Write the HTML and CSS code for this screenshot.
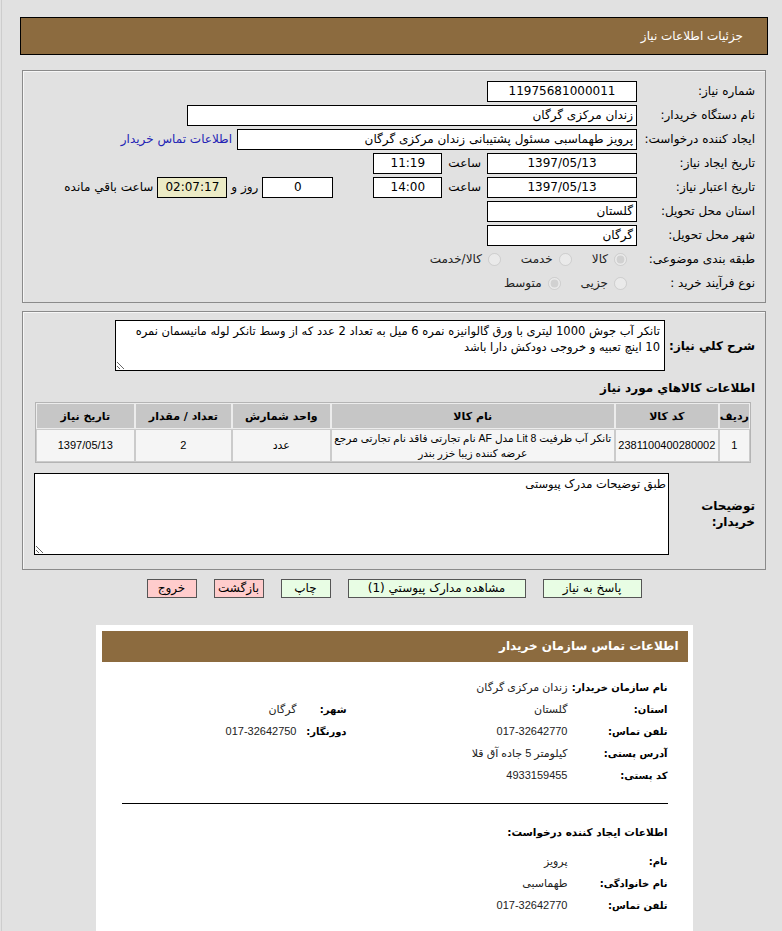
FILE: index.html
```html
<!DOCTYPE html>
<html lang="fa" dir="rtl">
<head>
    <meta charset="UTF-8"/>
    <title>جزئیات اطلاعات نیاز</title>
    <link rel="stylesheet" href="styles.css">
</head>
<body>
<div class="page">
    <div class="title-bar">جزئیات اطلاعات نیاز</div>

    <!-- main info -->
    <div class="panel info-panel">
        <div class="row">
            <span class="lbl">شماره نیاز:</span>
            <span class="field center w150">11975681000011</span>
        </div>
        <div class="row">
            <span class="lbl">نام دستگاه خریدار:</span>
            <span class="field w450">زندان مرکزی گرگان</span>
        </div>
        <div class="row">
            <span class="lbl">ایجاد کننده درخواست:</span>
            <span class="field w400">پرویز طهماسبی مسئول پشتیبانی زندان مرکزی گرگان</span>
            <a class="contact-link" href="#">اطلاعات تماس خریدار</a>
        </div>
        <div class="row">
            <span class="lbl">تاریخ ایجاد نیاز:</span>
            <span class="field center w150">1397/05/13</span>
            <span class="inline-lbl">ساعت</span>
            <span class="field center w69">11:19</span>
        </div>
        <div class="row">
            <span class="lbl">تاریخ اعتبار نیاز:</span>
            <span class="field center w150">1397/05/13</span>
            <span class="inline-lbl">ساعت</span>
            <span class="field center w69">14:00</span>
            <span class="field center w71 days">0</span>
            <span class="small-lbl">روز و</span>
            <span class="field center w70 remain">02:07:17</span>
            <span class="small-lbl">ساعت باقي مانده</span>
        </div>
        <div class="row">
            <span class="lbl">استان محل تحویل:</span>
            <span class="field w150">گلستان</span>
        </div>
        <div class="row">
            <span class="lbl">شهر محل تحویل:</span>
            <span class="field w150">گرگان</span>
        </div>
        <div class="row">
            <span class="lbl">طبقه بندی موضوعی:</span>
            <label class="opt"><input type="radio" disabled checked> کالا</label>
            <label class="opt"><input type="radio" disabled> خدمت</label>
            <label class="opt"><input type="radio" disabled> کالا/خدمت</label>
        </div>
        <div class="row">
            <span class="lbl">نوع فرآیند خرید :</span>
            <label class="opt"><input type="radio" disabled> جزیی</label>
            <label class="opt"><input type="radio" disabled checked> متوسط</label>
        </div>
    </div>

    <!-- goods -->
    <div class="panel goods-panel">
        <div class="desc-row">
            <span class="desc-lbl">شرح کلي نياز:</span>
            <textarea class="desc-box" readonly>تانکر آب جوش 1000 لیتری با ورق گالوانیزه نمره 6 میل به تعداد 2 عدد که از وسط تانکر لوله مانیسمان نمره 10 اینچ تعبیه و خروجی دودکش دارا باشد</textarea>
        </div>

        <div class="section-title">اطلاعات کالاهاي مورد نياز</div>

        <table class="goods-table">
            <tr>
                <th class="c-idx">ردیف</th>
                <th class="c-code">کد کالا</th>
                <th class="c-name">نام کالا</th>
                <th class="c-unit">واحد شمارش</th>
                <th class="c-qty">تعداد / مقدار</th>
                <th class="c-date">تاریخ نیاز</th>
            </tr>
            <tr>
                <td>1</td>
                <td>2381100400280002</td>
                <td class="name-cell">تانکر آب ظرفیت 8 Lit مدل AF نام تجارتی فاقد نام تجارتی مرجع عرضه کننده زیبا خزر بندر</td>
                <td>عدد</td>
                <td>2</td>
                <td>1397/05/13</td>
            </tr>
        </table>

        <div class="notes-row">
            <span class="notes-lbl">توضیحات خریدار:</span>
            <textarea class="notes-box" readonly>طبق توضیحات مدرک پیوستی</textarea>
        </div>
    </div>

    <div class="buttons">
        <button class="btn green w99">پاسخ به نیاز</button>
        <button class="btn green w178">مشاهده مدارک پیوستي (1)</button>
        <button class="btn green w50">چاپ</button>
        <button class="btn pink w50">بازگشت</button>
        <button class="btn pink w50">خروج</button>
    </div>

    <!-- buyer contact card -->
    <div class="card">
        <div class="card-head">اطلاعات تماس سازمان خریدار</div>
        <div class="card-body">
            <div class="info-grid">
                <span class="k">نام سازمان خریدار:</span>
                <span class="v">زندان مرکزی گرگان</span>
                <span></span><span></span>

                <span class="k">استان:</span>
                <span class="v">گلستان</span>
                <span class="k">شهر:</span>
                <span class="v">گرگان</span>

                <span class="k">تلفن تماس:</span>
                <span class="v">017-32642770</span>
                <span class="k">دورنگار:</span>
                <span class="v">017-32642750</span>

                <span class="k">آدرس پستی:</span>
                <span class="v">کیلومتر 5 جاده آق قلا</span>
                <span></span><span></span>

                <span class="k">کد پستی:</span>
                <span class="v">4933159455</span>
                <span></span><span></span>
            </div>

            <hr class="divider">

            <div class="sub-title">اطلاعات ایجاد کننده درخواست:</div>

            <div class="info-grid creator">
                <span class="k">نام:</span>
                <span class="v">پرویز</span>
                <span></span><span></span>

                <span class="k">نام خانوادگی:</span>
                <span class="v">طهماسبی</span>
                <span></span><span></span>

                <span class="k">تلفن تماس:</span>
                <span class="v">017-32642770</span>
                <span></span><span></span>
            </div>
        </div>
    </div>
</div>
</body>
</html>
```

FILE: styles.css
```css
/* Base */
html, body {
    margin: 0;
    padding: 0;
}

body {
    background-color: #e1e1e1;
    border-left: 1px solid #cdcdcd;
    margin-left: 1px;
    font-family: "DejaVu Sans", sans-serif;
    font-size: 12px;
    color: #000;
    height: 931px;
    overflow: hidden;
}

.page {
    width: 748px;
    margin: 17px 14px 0 auto;
}

/* Title bar */
.title-bar {
    height: 38px;
    box-sizing: border-box;
    background-color: #8c6b3f;
    border: 1px solid #000;
    color: #fff;
    font-size: 12px;
    line-height: 36px;
    padding-right: 24px;
}

/* Panels */
.panel {
    margin: 0 2px;
    border: 1px solid #8a8a8a;
    box-shadow: inset 1px 1px 0 #f6f6f6;
}

.info-panel {
    margin-top: 15px;
    padding: 8px 10px 7px 10px;
}

.row {
    display: flex;
    align-items: center;
    height: 24px;
}

.lbl {
    width: 118px;
    flex: none;
    white-space: nowrap;
}

.field {
    display: inline-block;
    height: 21px;
    box-sizing: border-box;
    border: 1px solid #000;
    background-color: #fff;
    line-height: 19px;
    padding: 0 3px;
    font-size: 12px;
    white-space: nowrap;
    overflow: hidden;
}

.center {
    text-align: center;
}

.w150 { width: 150px; }
.w450 { width: 450px; }
.w400 { width: 400px; }
.w69 { width: 69px; }
.w70 { width: 70px; }
.w71 { width: 71px; }

.contact-link {
    color: #2323b4;
    text-decoration: none;
    margin-right: 5px;
}

.inline-lbl {
    margin: 0 6px 0 6px;
}

.days {
    margin-right: 40px;
}

.small-lbl {
    margin: 0 4px;
}

.remain {
    background-color: #ecebc6;
}

/* Radio options */
.opt {
    display: inline-flex;
    align-items: center;
    margin-left: 20px;
    color: #222;
}

.opt input {
    width: 13px;
    height: 13px;
    margin: 0 10px 0 6px;
    opacity: 0.7;
}

.opt + .opt input {
    margin-right: 0;
}

/* Goods panel */
.goods-panel {
    margin-top: 8px;
    padding: 8px 10px 14px 11px;
}

.desc-row {
    display: flex;
    align-items: center;
}

.desc-lbl,
.notes-lbl {
    font-weight: bold;
    font-size: 12px;
}

.desc-lbl {
    width: 90px;
    flex: none;
}

textarea {
    font-family: "DejaVu Sans", sans-serif;
    font-size: 11.5px;
    line-height: 16px;
    border: 1px solid #000;
    box-sizing: border-box;
    padding: 2px 4px 1px 10px;
    background-color: #fff;
    color: #000;
    outline: none;
}

.desc-box {
    width: 550px;
    height: 51px;
}

.section-title {
    font-weight: bold;
    margin: 9px 0 6px 0;
    line-height: 16px;
}

.goods-table {
    width: 716px;
    margin-right: 4px;
    border: 1px solid #b4b4b4;
    border-spacing: 0;
    font-size: 11px;
}

.goods-table th {
    background-color: #c6c6c6;
    border: 1px solid #ececec;
    height: 24px;
    font-weight: bold;
    padding: 0;
}

.goods-table td {
    background-color: #f5f5f5;
    border: 1px solid #cbcbcb;
    height: 31px;
    text-align: center;
    padding: 0 2px;
    font-family: "Liberation Sans", "DejaVu Sans", sans-serif;
    line-height: 15px;
}

.goods-table .name-cell {
    font-size: 10.5px;
    padding: 0 1px;
}

.c-idx { width: 23px; }
.c-code { width: 99px; }
.c-name { width: 281px; }
.c-unit { width: 96px; }
.c-qty { width: 95px; }
.c-date { width: 96px; }

.notes-row {
    display: flex;
    align-items: center;
    margin-top: 10px;
}

.notes-lbl {
    width: 86px;
    flex: none;
    line-height: 16px;
}

.notes-box {
    width: 636px;
    height: 82px;
    padding-right: 2px;
}

/* Buttons */
.buttons {
    display: flex;
    justify-content: center;
    gap: 17px;
    margin-top: 9px;
}

.btn {
    height: 19px;
    padding: 0;
    border: 1px solid #555;
    font-family: "DejaVu Sans", sans-serif;
    font-size: 12px;
    line-height: 17px;
    color: #000;
}

.green {
    background-color: #e8fde4;
}

.pink {
    background-color: #ffcccc;
}

.w99 { width: 99px; }
.w178 { width: 178px; }
.w50 { width: 50px; }

/* Contact card */
.card {
    width: 597px;
    box-sizing: border-box;
    margin: 27px auto 0 auto;
    background-color: #fff;
    padding: 6px 5px 20px 6px;
}

.card-head {
    height: 31px;
    background-color: #8c6b3f;
    color: #fff;
    font-weight: bold;
    font-size: 12px;
    line-height: 31px;
    padding-right: 9px;
}

.card-body {
    padding: 14px 20px 0 20px;
}

.info-grid {
    display: grid;
    grid-template-columns: 100px 221px 50px auto;
    grid-auto-rows: 22px;
    align-items: center;
}

.k {
    font-weight: bold;
    font-size: 10px;
    white-space: nowrap;
}

.v {
    font-family: "Liberation Sans", "DejaVu Sans", sans-serif;
    font-size: 11px;
    color: #222;
}

.divider {
    border: 0;
    border-top: 1px solid #000;
    margin: 17px 0 0 0;
}

.sub-title {
    font-weight: bold;
    font-size: 10.5px;
    margin: 22px 0 12px 0;
}
```
